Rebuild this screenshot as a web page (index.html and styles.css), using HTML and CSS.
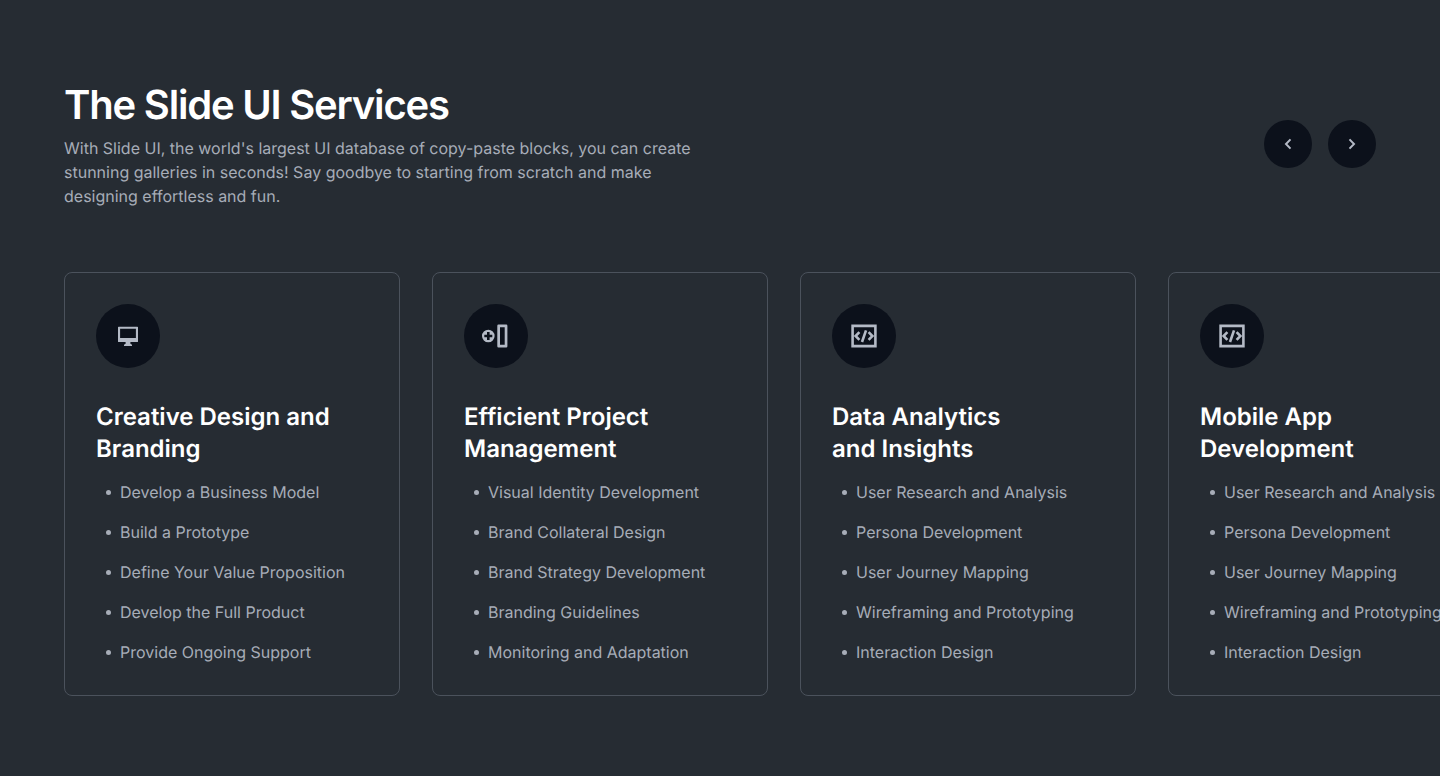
FILE: index.html
```html
<!DOCTYPE html>
<html lang="en">
<head>
<meta charset="utf-8">
<meta name="viewport" content="width=device-width, initial-scale=1">
<title>The Slide UI Services</title>
<link rel="stylesheet" href="styles.css">
</head>
<body>
<main class="services">
  <header class="services-header">
    <div class="intro">
      <h1 class="title">The Slide UI Services</h1>
      <p class="lead">With Slide UI, the world's largest UI database of copy-paste blocks, you can create stunning galleries in seconds! Say goodbye to starting from scratch and make designing effortless and fun.</p>
    </div>
    <div class="controls">
      <button class="nav-button" type="button" aria-label="Previous"><svg width="16" height="16" viewBox="0 0 16 16"><path d="M10.500 3.400 6 8l4.500 4.600"/></svg></button>
      <button class="nav-button" type="button" aria-label="Next"><svg width="16" height="16" viewBox="0 0 16 16"><path d="M5.500 3.400 10 8l-4.500 4.600"/></svg></button>
    </div>
  </header>
  <div class="track">
    <article class="card">
      <span class="icon"><svg width="32" height="32" viewBox="0 0 32 32"><path fill-rule="evenodd" d="M6.600 6.700h18.800a.6.6 0 0 1 .6.6v14.100a.6.6 0 0 1-.6.6h-7v1.800l1.600.9V26h-8v-1.300l1.600-.9V22h-7a.6.6 0 0 1-.6-.6V7.300a.6.6 0 0 1 .6-.6zm1.500 2.100V18h15.800V8.800z"/></svg></span>
      <h2 class="card-title">Creative Design and Branding</h2>
      <ul class="list"><li>Develop a Business Model</li><li>Build a Prototype</li><li>Define Your Value Proposition</li><li>Develop the Full Product</li><li>Provide Ongoing Support</li></ul>
    </article>
    <article class="card">
      <span class="icon"><svg width="32" height="32" viewBox="0 0 32 32"><path fill-rule="evenodd" d="M18.500 4.600h7.700a1.200 1.200 0 0 1 1.200 1.200v20.400a1.200 1.200 0 0 1-1.200 1.200h-7.700a1.200 1.200 0 0 1-1.200-1.200V5.800a1.200 1.200 0 0 1 1.200-1.200zM20 7.300v17.400h4.700V7.300zM8.300 9.700a6.300 6.300 0 1 1 0 12.600 6.300 6.300 0 0 1 0-12.600zM7 12v2.700H4.300v2.600H7V20h2.600v-2.700h2.700v-2.600H9.600V12z"/></svg></span>
      <h2 class="card-title">Efficient Project Management</h2>
      <ul class="list"><li>Visual Identity Development</li><li>Brand Collateral Design</li><li>Brand Strategy Development</li><li>Branding Guidelines</li><li>Monitoring and Adaptation</li></ul>
    </article>
    <article class="card">
      <span class="icon"><svg width="32" height="32" viewBox="0 0 32 32"><path class="stroke" d="M4.600 5.900h22.800v20.200H4.600zM11.400 12.200 7.600 16l3.800 3.800M20.600 12.200l3.800 3.800-3.800 3.800M18 10.400l-4 11.600"/></svg></span>
      <h2 class="card-title">Data Analytics<br>and Insights</h2>
      <ul class="list"><li>User Research and Analysis</li><li>Persona Development</li><li>User Journey Mapping</li><li>Wireframing and Prototyping</li><li>Interaction Design</li></ul>
    </article>
    <article class="card">
      <span class="icon"><svg width="32" height="32" viewBox="0 0 32 32"><path class="stroke" d="M4.600 5.900h22.800v20.200H4.600zM11.400 12.200 7.600 16l3.800 3.800M20.600 12.200l3.800 3.800-3.800 3.800M18 10.400l-4 11.600"/></svg></span>
      <h2 class="card-title">Mobile App Development</h2>
      <ul class="list"><li>User Research and Analysis</li><li>Persona Development</li><li>User Journey Mapping</li><li>Wireframing and Prototyping</li><li>Interaction Design</li></ul>
    </article>
  </div>
</main>
</body>
</html>
```
FILE: styles.css
```css
* { box-sizing: border-box; }
body { margin: 0; min-height: 100vh; background: #262c33; color: #fff; font-family: Inter, "Liberation Sans", sans-serif; text-rendering: geometricPrecision; }
.services { padding: 80px 0 80px 64px; overflow: hidden; }
.services-header { display: flex; align-items: center; justify-content: space-between; gap: 32px; padding-right: 64px; }
.intro { max-width: 640px; }
.title { margin: 0 0 6px; font-size: 40px; line-height: 50px; font-weight: 600; letter-spacing: -0.03em; }
.lead { margin: 0; color: #a7adb8; font-size: 16px; line-height: 24px; }
.controls { display: flex; gap: 16px; }
.nav-button { display: grid; place-items: center; width: 48px; height: 48px; padding: 0; border: 0; border-radius: 50%; background: #0c111b; cursor: pointer; }
.nav-button path, .icon .stroke { fill: none; stroke: #b4bac6; stroke-width: 2; }
.icon .stroke { stroke-width: 2.6; }
.track { display: flex; gap: 32px; margin-top: 64px; overflow: hidden; }
.card { flex: 0 0 336px; padding: 31px; border: 1px solid #4b525c; border-radius: 8px; }
.icon { display: grid; place-items: center; width: 64px; height: 64px; border-radius: 50%; background: #0c111b; fill: #b4bac6; }
.card-title { margin: 33px 0 15px; font-size: 24px; line-height: 32px; font-weight: 600; }
.list { display: grid; gap: 16px; margin: 0; padding: 0; list-style: none; color: #a7adb8; font-size: 16px; line-height: 24px; white-space: nowrap; }
.list li { display: flex; align-items: center; }
.list li::before { content: ""; width: 5px; height: 5px; margin: 1px 9px 0 10px; border-radius: 50%; background: currentColor; }
```
